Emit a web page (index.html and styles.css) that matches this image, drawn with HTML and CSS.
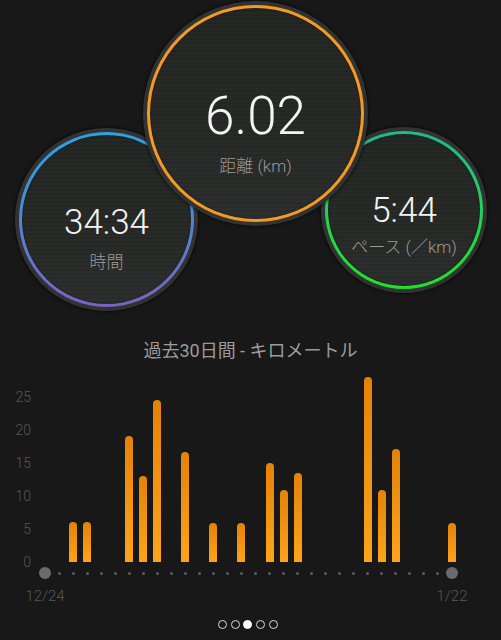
FILE: index.html
```html
<!DOCTYPE html>
<html lang="ja">
<head>
<meta charset="utf-8">
<link rel="stylesheet" href="styles.css">
</head>
<body>
<div class="screen">
  <section class="hero">
    <div class="gauge gauge-time">
      <div class="ring ring-blue">
        <div class="face face-time">
          <div class="value value-md">34:34</div>
          <div class="label label-time">時間</div>
        </div>
      </div>
    </div>
    <div class="gauge gauge-pace">
      <div class="ring ring-green">
        <div class="face face-pace">
          <div class="value value-md">5:44</div>
          <div class="label label-pace">ペース (／km)</div>
        </div>
      </div>
    </div>
    <div class="gauge gauge-dist">
      <div class="ring ring-orange">
        <div class="face face-dist">
          <div class="value value-lg">6.02</div>
          <div class="label label-dist">距離 (km)</div>
        </div>
      </div>
    </div>
  </section>

  <section class="chart">
    <h2 class="chart-title">過去30日間 - キロメートル</h2>
    <div class="chart-body">
      <div class="yaxis">
        <span>25</span><span>20</span><span>15</span><span>10</span><span>5</span><span>0</span>
      </div>
      <div class="plot">
        <div class="slot"></div>
        <div class="slot"></div>
        <div class="slot"><div class="bar" style="height:40px"></div></div>
        <div class="slot"><div class="bar" style="height:40px"></div></div>
        <div class="slot"></div>
        <div class="slot"></div>
        <div class="slot"><div class="bar" style="height:126px"></div></div>
        <div class="slot"><div class="bar" style="height:86px"></div></div>
        <div class="slot"><div class="bar" style="height:162px"></div></div>
        <div class="slot"></div>
        <div class="slot"><div class="bar" style="height:110px"></div></div>
        <div class="slot"></div>
        <div class="slot"><div class="bar" style="height:39px"></div></div>
        <div class="slot"></div>
        <div class="slot"><div class="bar" style="height:39px"></div></div>
        <div class="slot"></div>
        <div class="slot"><div class="bar" style="height:99px"></div></div>
        <div class="slot"><div class="bar" style="height:72px"></div></div>
        <div class="slot"><div class="bar" style="height:89px"></div></div>
        <div class="slot"></div>
        <div class="slot"></div>
        <div class="slot"></div>
        <div class="slot"></div>
        <div class="slot"><div class="bar" style="height:185px"></div></div>
        <div class="slot"><div class="bar" style="height:72px"></div></div>
        <div class="slot"><div class="bar" style="height:113px"></div></div>
        <div class="slot"></div>
        <div class="slot"></div>
        <div class="slot"></div>
        <div class="slot"><div class="bar" style="height:39px"></div></div>
      </div>
    </div>
    <div class="axis">
      <div class="tick"><span class="dot dot-end"></span></div>
      <div class="tick"><span class="dot"></span></div>
      <div class="tick"><span class="dot"></span></div>
      <div class="tick"><span class="dot"></span></div>
      <div class="tick"><span class="dot"></span></div>
      <div class="tick"><span class="dot"></span></div>
      <div class="tick"><span class="dot"></span></div>
      <div class="tick"><span class="dot"></span></div>
      <div class="tick"><span class="dot"></span></div>
      <div class="tick"><span class="dot"></span></div>
      <div class="tick"><span class="dot"></span></div>
      <div class="tick"><span class="dot"></span></div>
      <div class="tick"><span class="dot"></span></div>
      <div class="tick"><span class="dot"></span></div>
      <div class="tick"><span class="dot"></span></div>
      <div class="tick"><span class="dot"></span></div>
      <div class="tick"><span class="dot"></span></div>
      <div class="tick"><span class="dot"></span></div>
      <div class="tick"><span class="dot"></span></div>
      <div class="tick"><span class="dot"></span></div>
      <div class="tick"><span class="dot"></span></div>
      <div class="tick"><span class="dot"></span></div>
      <div class="tick"><span class="dot"></span></div>
      <div class="tick"><span class="dot"></span></div>
      <div class="tick"><span class="dot"></span></div>
      <div class="tick"><span class="dot"></span></div>
      <div class="tick"><span class="dot"></span></div>
      <div class="tick"><span class="dot"></span></div>
      <div class="tick"><span class="dot"></span></div>
      <div class="tick"><span class="dot dot-end"></span></div>
    </div>
    <div class="dates">
      <div class="date"><span>12/24</span></div>
      <div class="date"><span>1/22</span></div>
    </div>
  </section>

  <nav class="pager">
    <span class="pdot"></span>
    <span class="pdot"></span>
    <span class="pdot pdot-on"></span>
    <span class="pdot"></span>
    <span class="pdot"></span>
  </nav>
</div>
</body>
</html>
```

FILE: styles.css
```css
* { box-sizing: border-box; }

html, body {
  margin: 0;
  padding: 0;
  background: #181818;
}

body {
  font-family: Roboto, "Noto Sans CJK JP", sans-serif;
  color: #eee;
}

.screen {
  width: 501px;
  height: 640px;
  overflow: hidden;
  background: #181818;
}

/* ---------- gauges ---------- */
.hero {
  position: relative;
  height: 339px;
}

.gauge {
  position: absolute;
  border-radius: 50%;
  padding: 4px;
  background: #313231;
  box-shadow: 0 0 3px 1px rgba(0, 0, 0, 0.55);
}

.gauge-dist {
  left: 143px;
  top: 1px;
  width: 225px;
  height: 225px;
  z-index: 2;
}

.gauge-time {
  left: 15px;
  top: 128px;
  width: 183px;
  height: 183px;
}

.gauge-pace {
  left: 321px;
  top: 127px;
  width: 166px;
  height: 166px;
}

.ring {
  width: 100%;
  height: 100%;
  border-radius: 50%;
  padding: 3px;
}

.ring-orange { background: #f39a24; }
.ring-blue { background: linear-gradient(to bottom, #2aa3e4 0%, #4f86d4 50%, #7b62c2 100%); }
.ring-green { background: linear-gradient(to bottom, #22b88e 0%, #22d25a 50%, #1fe325 100%); }

.face {
  width: 100%;
  height: 100%;
  border-radius: 50%;
  display: flex;
  flex-direction: column;
  align-items: center;
  background:
    repeating-linear-gradient(to bottom, rgba(255,255,255,0.012) 0 2px, rgba(0,0,0,0.02) 2px 4px),
    linear-gradient(to bottom, #232523 0%, #262826 60%, #2b2d2c 100%);
  box-shadow: inset 0 0 2px rgba(0,0,0,0.6);
}

.face-dist { padding-top: 82px; }
.face-time { padding-top: 70px; }
.face-pace { padding-top: 59px; }

.value {
  font-family: Roboto, sans-serif;
  font-weight: 300;
  color: #f4f4f4;
  white-space: nowrap;
}

.value-lg {
  font-size: 53px;
  line-height: 53px;
}

.value-md {
  font-size: 35px;
  line-height: 35px;
}

.label {
  font-family: Roboto, "Noto Sans CJK JP", sans-serif;
  font-weight: 300;
  font-size: 17px;
  line-height: 20px;
  color: #9a9a9a;
  white-space: nowrap;
}

.label-dist { margin-top: 13px; }
.label-time { margin-top: 12px; }
.label-pace { margin-top: 9px; }

/* ---------- chart ---------- */
.chart-title {
  margin: 0;
  text-align: center;
  font-family: Roboto, "Noto Sans CJK JP", sans-serif;
  font-weight: 400;
  font-size: 18px;
  line-height: 24px;
  color: #9c9c9c;
}

.chart-body {
  display: flex;
  height: 199px;
}

.yaxis {
  width: 31px;
  margin-top: 26px;
  margin-bottom: -8px;
  display: flex;
  flex-direction: column;
  justify-content: space-between;
  align-items: flex-end;
  font-size: 14px;
  line-height: 16px;
  font-weight: 300;
  color: #575757;
}

.plot {
  margin-left: 7px;
  width: 421px;
  display: flex;
  align-items: flex-end;
}

.slot {
  flex: 1 1 0;
  display: flex;
  justify-content: center;
  align-items: flex-end;
}

.bar {
  width: 8px;
  border-radius: 4px 4px 0 0;
  background: linear-gradient(to bottom, #e48208 0%, #f09312 50%, #ffa31a 100%);
}

.axis {
  margin-left: 38px;
  width: 421px;
  height: 12px;
  margin-top: 5px;
  display: flex;
}

.tick {
  flex: 1 1 0;
  display: flex;
  justify-content: center;
  align-items: center;
}

.dot {
  width: 3px;
  height: 3px;
  border-radius: 50%;
  background: #5e5e5e;
}

.dot-end {
  width: 12px;
  height: 12px;
  background: #6b6b6b;
}

.dates {
  margin-left: 38px;
  width: 421px;
  margin-top: 9px;
  display: flex;
  justify-content: space-between;
}

.date {
  width: 14px;
  display: flex;
  justify-content: center;
  white-space: nowrap;
  font-size: 15px;
  line-height: 16px;
  font-weight: 300;
  color: #575757;
}

/* ---------- pager ---------- */
.pager {
  margin-top: 16px;
  display: flex;
  justify-content: center;
  gap: 3.7px;
  padding-right: 5.6px;
}

.pdot {
  width: 9px;
  height: 9px;
  border-radius: 50%;
  border: 1.5px solid #d8d8d8;
}

.pdot-on {
  background: #ffffff;
  border-color: #ffffff;
}
```
